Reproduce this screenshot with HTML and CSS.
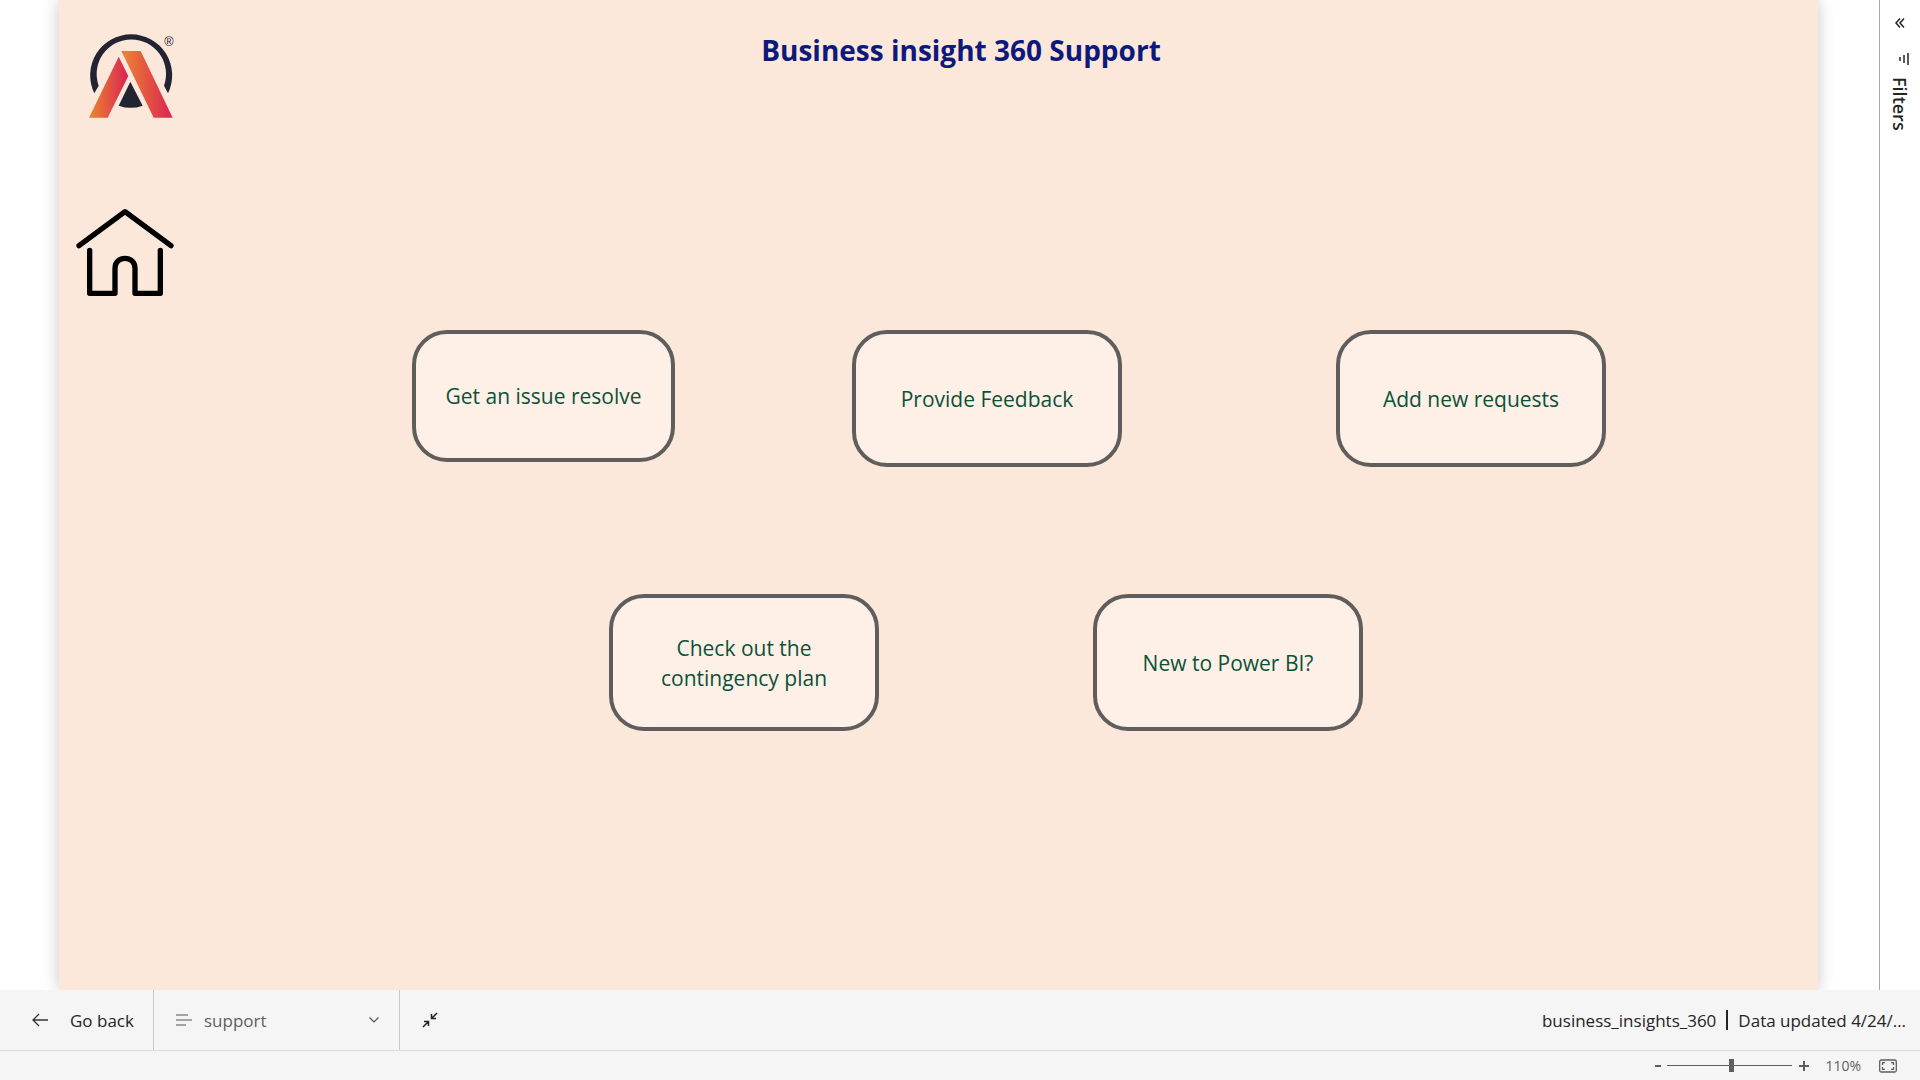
FILE: index.html
```html
<!DOCTYPE html>
<html lang="en">
<head>
<meta charset="utf-8">
<title>Business insight 360 Support</title>
<link rel="stylesheet" href="styles.css">
</head>
<body>
<div class="workspace">
  <main class="stage">
    <div class="report">
      <div class="rail">
        <svg class="logo" viewBox="141 96 270 264" role="img" aria-label="Company logo">
          <defs>
            <linearGradient id="legLeft" gradientUnits="userSpaceOnUse" x1="147" y1="0" x2="265" y2="0"><stop offset="0.1" stop-color="#eb7d34"/><stop offset="0.9" stop-color="#db2c50"/></linearGradient>
            <linearGradient id="legRight" gradientUnits="userSpaceOnUse" x1="244" y1="0" x2="398" y2="0"><stop offset="0.1" stop-color="#eb7d34"/><stop offset="0.9" stop-color="#db2c50"/></linearGradient>
          </defs>
          <path fill="#222433" d="M163 280A123 123 0 1 1 384 280L372 257A104 104 0 1 0 176 257Z"/>
          <path fill="url(#legLeft)" d="M236 170L265 228L203 353H147Z"/>
          <path fill="url(#legRight)" d="M244 153H302L398 353H341Z"/>
          <path fill="#222433" d="M271 245L308 317Q272 330 236 317Z"/>
          <text class="mark" x="373" y="137">®</text>
        </svg>
        <a class="home" href="#" aria-label="Home">
          <svg viewBox="105 621 300 270" fill="none" stroke="#000" stroke-width="16" stroke-linecap="round" stroke-linejoin="round">
            <path d="M117 737L255 635L393 737M149 751V880H225V805C225 765 285 765 285 805V880H361V751"/>
          </svg>
        </a>
      </div>
      <div class="content">
        <h1 class="title">Business insight 360 Support</h1>
        <div class="row row-top">
          <button class="tile tile-small">Get an issue resolve</button>
          <button class="tile">Provide Feedback</button>
          <button class="tile">Add new requests</button>
        </div>
        <div class="row row-bottom">
          <button class="tile">Check out the contingency plan</button>
          <button class="tile">New to Power BI?</button>
        </div>
      </div>
    </div>
  </main>
  <aside class="filters">
    <button class="icon-button" aria-label="Expand filters">
      <svg width="10" height="10" viewBox="0 0 10 10" fill="none" stroke="#252423" stroke-width="1.5"><path d="M5 .5L1 5L5 9.5M9 .5L5 5L9 9.5"/></svg>
    </button>
    <svg class="filter-icon" width="10" height="12" viewBox="0 0 10 12" stroke="#252423" stroke-width="1.5"><path d="M9 0V12M5 2V10M1 4V8"/></svg>
    <span class="filters-label">Filters</span>
  </aside>
</div>
<footer>
  <div class="actionbar">
    <button class="back">
      <svg width="16" height="14" viewBox="0 0 16 14" fill="none" stroke="#333" stroke-width="1.3"><path d="M7 1L1 7L7 13M1 7H16"/></svg>
      <span>Go back</span>
    </button>
    <button class="pages">
      <svg width="16" height="12" viewBox="0 0 16 12" stroke="#555" stroke-width="1.2"><path d="M0 1H12M0 6H16M0 11H10"/></svg>
      <span class="page-name">support</span>
      <svg width="10" height="6" viewBox="0 0 10 6" fill="none" stroke="#555" stroke-width="1.2"><path d="M.5 .5L5 5L9.500 .5"/></svg>
    </button>
    <button class="collapse" aria-label="Exit full screen">
      <svg width="16" height="16" viewBox="0 0 16 16" fill="none" stroke="#252423" stroke-width="1.5"><path d="M15 1L10 6M9.500 2V6.500H14M1 15L6 10M2 9.500H6.500V14"/></svg>
    </button>
    <div class="info"><span>business_insights_360</span><i class="divider"></i><span>Data updated 4/24/…</span></div>
  </div>
  <div class="statusbar">
    <button class="step" aria-label="Zoom out"><svg width="10" height="10" viewBox="0 0 10 10" stroke="#605e5c" stroke-width="2"><path d="M2 5H8"/></svg></button>
    <input class="zoom" type="range" min="10" max="210" value="113" aria-label="Zoom">
    <button class="step" aria-label="Zoom in"><svg width="10" height="10" viewBox="0 0 10 10" stroke="#605e5c" stroke-width="2"><path d="M0 5H10M5 0V10"/></svg></button>
    <span class="percent">110%</span>
    <button class="fit" aria-label="Fit to page">
      <svg width="18" height="14" viewBox="0 0 18 14" fill="none" stroke="#605e5c" stroke-width="1.3"><rect x=".7" y="1" width="16.600" height="12" rx="1.500"/><path d="M3.500 6V3.700H6M12 3.700H14.500V6M14.500 8V10.300H12M6 10.300H3.500V8"/></svg>
    </button>
  </div>
</footer>
</body>
</html>
```
FILE: styles.css
```css
* { box-sizing: border-box; }
body {
  margin: 0;
  min-height: 100vh;
  display: flex;
  flex-direction: column;
  background: #fff;
  font-family: "Segoe UI", "Open Sans", "Noto Sans", sans-serif;
  color: #252423;
}
button {
  font: inherit;
  color: inherit;
  background: none;
  border: 0;
  padding: 0;
  cursor: pointer;
}
svg { display: block; flex: none; }

.workspace { flex: 1; display: flex; }
.stage {
  flex: 1;
  display: flex;
  padding: 0 61px 0 59px;
  overflow: hidden;
}
.report {
  flex: 1;
  display: flex;
  background: #fce8db;
  box-shadow: 0 0 16px rgba(0, 0, 0, 0.22);
}
.rail { width: 140px; padding-top: 32px; }
.logo { width: 90px; height: 88px; margin-left: 28px; }
.mark { font: 38px "Liberation Sans", sans-serif; fill: #222433; }
.home { display: block; width: 100px; margin: 87px 0 0 16px; }

.content { flex: 1; padding: 30px 95px 0 0; }
.title {
  margin: 0 0 260px;
  font-size: 28px;
  line-height: 40px;
  font-weight: 700;
  text-align: center;
  color: #0d1a7c;
}
.row { display: grid; align-items: start; margin-bottom: 127px; }
.row-top { grid-template-columns: 213fr 263px 177fr 270px 214fr 270px 117fr; }
.row-bottom { grid-template-columns: 410fr 270px 214fr 270px 360fr; }
.tile:nth-child(1) { grid-column: 2; }
.tile:nth-child(2) { grid-column: 4; }
.tile:nth-child(3) { grid-column: 6; }
.tile {
  min-height: 137px;
  padding: 0 40px;
  border: 4px solid #605e5c;
  border-radius: 35px;
  background: #fef0e7;
  color: #0b5137;
  font-size: 21px;
  line-height: 30px;
}
.tile-small { min-height: 132px; padding: 0 20px; }

.filters {
  width: 41px;
  border-left: 1px solid #a8a8a8;
  display: flex;
  flex-direction: column;
  align-items: center;
  padding-top: 18px;
}
.filter-icon { align-self: flex-end; margin: 25px 11px 12px 0; }
.filters-label {
  writing-mode: vertical-rl;
  font-size: 18px;
  line-height: 24px;
  font-weight: 600;
}

.actionbar {
  display: flex;
  height: 60px;
  background: #f5f5f5;
  font-size: 17px;
}
.back {
  width: 154px;
  padding-left: 32px;
  display: flex;
  align-items: center;
  gap: 22px;
  border-right: 1px solid #c8c8c8;
}
.pages {
  width: 246px;
  padding: 0 20px 0 22px;
  display: flex;
  align-items: center;
  gap: 12px;
  border-right: 1px solid #c8c8c8;
  color: #605e5c;
}
.page-name { flex: 1; text-align: left; }
.collapse { padding: 0 22px; }
.info {
  margin-left: auto;
  padding-right: 14px;
  display: flex;
  align-items: center;
  gap: 10px;
}
.divider { width: 2px; height: 20px; background: #252423; }

.statusbar {
  height: 30px;
  display: flex;
  align-items: center;
  justify-content: flex-end;
  padding-right: 23px;
  border-top: 1px solid #dcdcdc;
  background: #f5f5f5;
  color: #605e5c;
  font-size: 14px;
}
.zoom {
  -webkit-appearance: none;
  appearance: none;
  width: 125px;
  height: 14px;
  margin: 0 7px 0 4px;
  background: linear-gradient(#605e5c, #605e5c) center / 100% 1px no-repeat;
}
.zoom::-webkit-slider-thumb {
  -webkit-appearance: none;
  width: 5px;
  height: 13px;
  background: #605e5c;
}
.percent { margin: 0 18px 0 16px; }
```
